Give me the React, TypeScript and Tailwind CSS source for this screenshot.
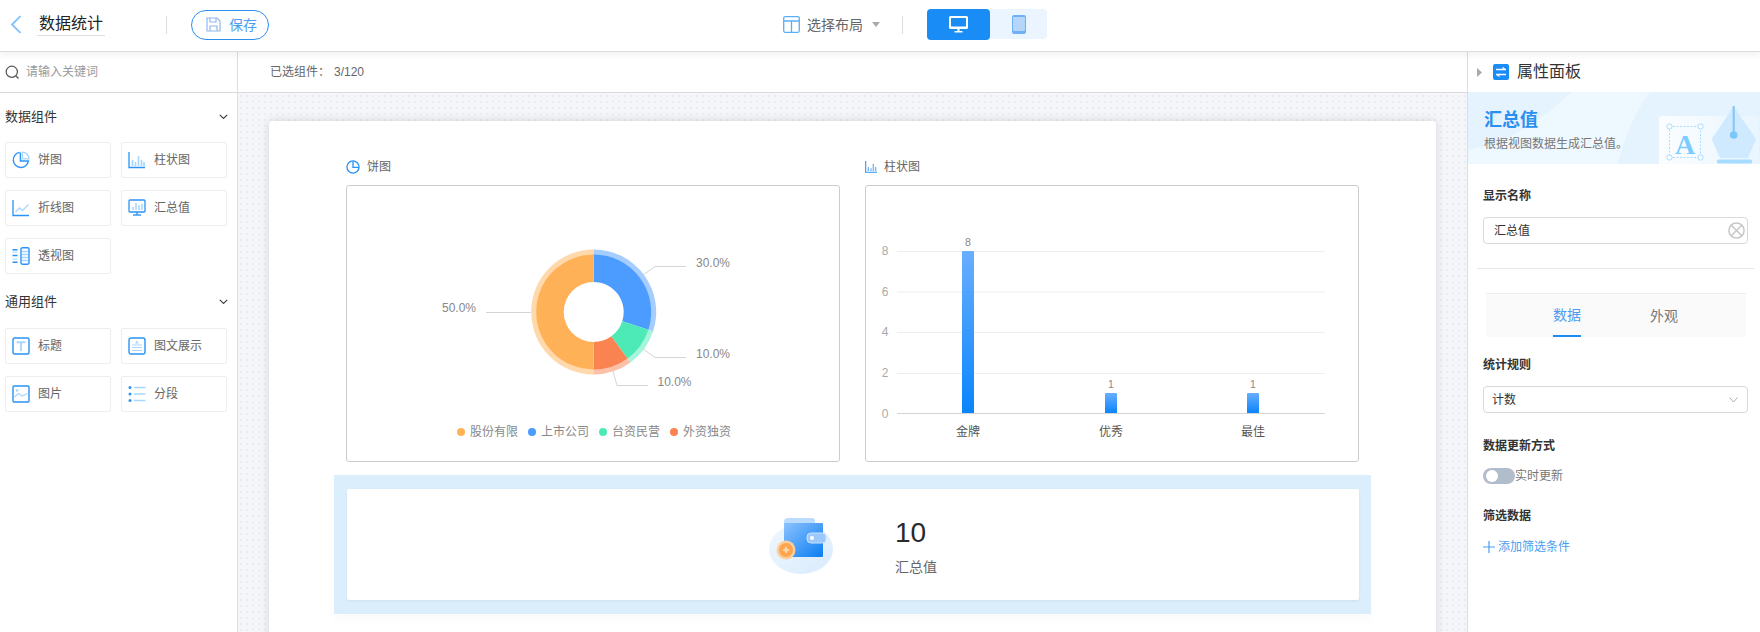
import React from "react";

const B = "#2b93f5";
const L = "#a9d6ff";

function polar(r: number, pct: number) {
  const a = (pct / 100) * Math.PI * 2;
  return [r * Math.sin(a), -r * Math.cos(a)];
}
function ring(r0: number, r1: number, from: number, to: number) {
  const [x0, y0] = polar(r1, from);
  const [x1, y1] = polar(r1, to);
  const [x2, y2] = polar(r0, to);
  const [x3, y3] = polar(r0, from);
  const large = to - from > 50 ? 1 : 0;
  return `M${x0} ${y0}A${r1} ${r1} 0 ${large} 1 ${x1} ${y1}L${x2} ${y2}A${r0} ${r0} 0 ${large} 0 ${x3} ${y3}Z`;
}

const Icon = ({ children, s = 18 }: { children: React.ReactNode; s?: number }) => (
  <svg width={s} height={s} viewBox="0 0 18 18" fill="none" className="shrink-0">
    {children}
  </svg>
);

const PieI = ({ s }: { s?: number }) => (
  <Icon s={s}>
    <path d="M7.6 1.4A7.6 7.6 0 1 0 16.4 10H8.4V1.4" stroke={B} strokeWidth="1.4" />
    <path d="M10.4 1.2A6.8 6.8 0 0 1 17 7.8H10.4Z" stroke={L} strokeWidth="1.3" />
  </Icon>
);
const TitlePie = () => (
  <Icon s={14}>
    <circle cx="9" cy="9" r="7.8" stroke={B} strokeWidth="1.7" />
    <path d="M9 1.5V9.5H16.5" stroke={B} strokeWidth="1.7" />
  </Icon>
);
const BarI = ({ s }: { s?: number }) => (
  <Icon s={s}>
    <path d="M1 1V16.5H17" stroke={B} strokeWidth="1.3" />
    <path d="M4.5 15V9M7.5 15V11M10.5 15V5M13.5 15V9M16 15V11" stroke={L} strokeWidth="1.7" />
  </Icon>
);
const TitleBar = () => (
  <Icon s={12}>
    <path d="M1 0V17H18" stroke={B} strokeWidth="1.6" />
    <path d="M5 15V9M9 15V11M12.5 15V4M16 15V9" stroke="#73b6f8" strokeWidth="2" />
  </Icon>
);
const LineI = () => (
  <Icon>
    <path d="M1 1V16.5H17" stroke={B} strokeWidth="1.3" />
    <path d="M3.5 13L7.5 9L10.5 11.5L16.5 5.5" stroke={L} strokeWidth="1.3" />
  </Icon>
);
const SumI = () => (
  <Icon>
    <rect x="1" y="1" width="16" height="12" rx="1" stroke={B} strokeWidth="1.3" />
    <path d="M5 11V8M8 11V4M11 11V6M14 11V5" stroke={L} strokeWidth="1.6" />
    <path d="M5 16H13" stroke={B} strokeWidth="1.4" />
    <path d="M9 13V16" stroke={B} strokeWidth="1.3" />
  </Icon>
);
const PivotI = () => (
  <Icon>
    <rect x="9" y="0.8" width="8" height="16.4" rx="1.4" stroke={B} strokeWidth="1.4" />
    <path d="M10 4.5H16M10 7.5H16M10 10.5H16M10 13.5H16" stroke={L} strokeWidth="1.3" />
    <path d="M0.5 2.8H5.5M0.5 8.5H5.5M0.5 15.2H5.5" stroke={B} strokeWidth="1.4" />
    <path d="M0.5 5H5.5M0.5 12H5.5" stroke={L} strokeWidth="1" />
  </Icon>
);
const TitleI = () => (
  <Icon>
    <rect x="1" y="1" width="16" height="16" rx="1.5" stroke={B} strokeWidth="1.4" />
    <path d="M4.5 5.2H13.5M9 5.2V14" stroke={L} strokeWidth="1.9" />
  </Icon>
);
const RichI = () => (
  <Icon>
    <rect x="1" y="1" width="16" height="16" rx="2" stroke={B} strokeWidth="1.4" />
    <path d="M9 3.5L11 6.5H7Z" fill={L} />
    <path d="M4 8H14M4 10.5H14M4 13.5H14" stroke={L} strokeWidth="1.2" />
  </Icon>
);
const PicI = () => (
  <Icon>
    <rect x="1" y="1" width="16" height="16" rx="1" stroke={B} strokeWidth="1.4" />
    <circle cx="5" cy="5.5" r="1.3" fill={L} />
    <path d="M2.5 12L6.5 8.5L10 11L15.5 8.5" stroke={L} strokeWidth="1.2" />
  </Icon>
);
const ListI = () => (
  <Icon>
    <circle cx="2" cy="2.5" r="1.5" fill={B} />
    <circle cx="2" cy="9" r="1.5" fill={B} />
    <circle cx="2" cy="15.5" r="1.5" fill={B} />
    <path d="M6 2.5H17.5M6 9H17.5M6 15.5H17.5" stroke={L} strokeWidth="1.3" />
  </Icon>
);

const Chevron = () => (
  <svg width="9" height="6" viewBox="0 0 9 6" fill="none">
    <path d="M0.8 0.8L4.5 4.5L8.2 0.8" stroke="#444" strokeWidth="1.2" />
  </svg>
);

const Item = ({ icon, label }: { icon: React.ReactNode; label: string }) => (
  <div className="h-9 border border-[#eeeeee] rounded-[2px] flex items-center pl-[6px] gap-[8px] text-xs text-[#666666] bg-white">
    {icon}
    <span>{label}</span>
  </div>
);

const Section = ({ title, extra, head, children }: { title: string; extra?: string; head: string; children: React.ReactNode }) => (
  <div className={extra}>
    <div className={`h-[49px] flex items-center justify-between pl-[5px] pr-[9px] text-[13px] text-[#333333] ${head}`}>
      <span>{title}</span>
      <Chevron />
    </div>
    <div className="grid grid-cols-[106px_106px] gap-x-[10px] gap-y-[12px] pl-[5px]">{children}</div>
  </div>
);

const Label = ({ children }: { children: React.ReactNode }) => (
  <div className="text-xs font-semibold text-[#333333] leading-[16px]">{children}</div>
);

const PieChart = () => {
  const slices = [
    { c: "#4c9bff", a: 0, b: 30 },
    { c: "#4deab8", a: 30, b: 40 },
    { c: "#f98452", a: 40, b: 50 },
    { c: "#ffb157", a: 50, b: 100 },
  ];
  return (
    <svg width="492" height="275" viewBox="0 0 492 275" className="block">
      <g transform="translate(246.7 126)">
        {slices.map((s) => (
          <path key={s.c} d={ring(57, 62.5, s.a, s.b)} fill={s.c} opacity={0.5} />
        ))}
        {slices.map((s) => (
          <path key={s.c + "m"} d={ring(30, 57.5, s.a, s.b)} fill={s.c} />
        ))}
      </g>
      <g stroke="#d5d5d5" fill="none">
        <path d="M296 89L308 80.5H339" />
        <path d="M296 163L308 171.5H339" />
        <path d="M266 185L270 199.5H301" />
        <path d="M184 126.5H139" />
      </g>
      <g fill="#888888" fontSize="12">
        <text x="349" y="81">30.0%</text>
        <text x="349" y="172">10.0%</text>
        <text x="310.5" y="200">10.0%</text>
        <text x="95" y="126">50.0%</text>
      </g>
    </svg>
  );
};

const BarChart = () => {
  const gy = [252, 292.5, 333, 374];
  const ox = 866;
  const oy = 187;
  const bars = [
    { x: 962, y: 252, l: "8", n: "金牌", id: "g1" },
    { x: 1105, y: 394, l: "1", n: "优秀", id: "g2" },
    { x: 1247, y: 394, l: "1", n: "最佳", id: "g3" },
  ];
  return (
    <svg width="492" height="275" viewBox="0 0 492 275" className="block">
      <defs>
        {bars.map((b) => (
          <linearGradient key={b.id} id={b.id} x1="0" y1="0" x2="0" y2="1">
            <stop offset="0" stopColor="#69aeff" />
            <stop offset="1" stopColor="#0a85fb" />
          </linearGradient>
        ))}
      </defs>
      {gy.map((y) => (
        <path key={y} d={`M${897 - ox} ${y - oy + 0.5}H${1325 - ox}`} stroke="#eeeeee" />
      ))}
      <path d={`M${897 - ox} ${414.5 - oy}H${1325 - ox}`} stroke="#d4d4d4" />
      {["8", "6", "4", "2", "0"].map((t, i) => (
        <text key={t} x={885 - ox} y={[256, 296.5, 336.5, 377.5, 418.5][i] - oy} fill="#aaaaaa" fontSize="12" textAnchor="middle">
          {t}
        </text>
      ))}
      {bars.map((b) => (
        <g key={b.id}>
          <path d={`M${b.x - ox} ${414 - oy}V${b.y - oy + 1}q0 -1 1 -1h10q1 0 1 1V${414 - oy}Z`} fill={`url(#${b.id})`} />
          <text x={b.x + 6 - ox} y={b.y - oy - 5} fill="#888888" fontSize="10.5" textAnchor="middle">
            {b.l}
          </text>
          <text x={b.x + 6 - ox} y={437 - oy} fill="#555555" fontSize="12" textAnchor="middle">
            {b.n}
          </text>
        </g>
      ))}
    </svg>
  );
};

const Wallet = () => (
  <svg width="68" height="62" viewBox="0 0 68 62" className="shrink-0">
    <defs>
      <linearGradient id="ws" x1="0" y1="0" x2="1" y2="1">
        <stop offset="0" stopColor="#f0f7ff" />
        <stop offset="1" stopColor="#d9ebfd" />
      </linearGradient>
      <linearGradient id="wb" x1="0" y1="0" x2="1" y2="1">
        <stop offset="0" stopColor="#8cc2ff" />
        <stop offset="1" stopColor="#0b7ef2" />
      </linearGradient>
    </defs>
    <ellipse cx="33" cy="35" rx="32" ry="25" fill="url(#ws)" />
    <path d="M16 8q0-4 4-4h24q3 0 3 3v6H16Z" fill="#bcdcff" />
    <rect x="16" y="9" width="39" height="34" rx="1" fill="url(#wb)" />
    <rect x="39" y="19" width="19" height="10" rx="4" fill="#9cc9fb" stroke="#c7e1fd" strokeWidth="1" />
    <circle cx="44" cy="24" r="2" fill="#ffffff" />
    <circle cx="18" cy="36" r="9.5" fill="#ffcf9b" />
    <circle cx="18" cy="36" r="7" fill="#ffa550" />
    <path d="M18 32L20 36L18 40L16 36ZM14 36L18 34L22 36L18 38Z" fill="#ffd9ae" />
  </svg>
);

export default function App() {
  return (
    <div className="w-[1760px] h-[632px] flex flex-col overflow-hidden bg-white font-['Liberation_Sans','Noto_Sans_CJK_SC',sans-serif]">
      {/* Top bar */}
      <header className="relative z-10 h-[52px] shrink-0 bg-white border-b border-[#dddddd] shadow-[0_2px_8px_rgba(0,0,0,0.07)] flex items-center">
        <svg width="12" height="19" viewBox="0 0 12 19" fill="none" className="ml-[10px] mb-[3px]">
          <path d="M10.5 1.2L2 9.5L10.5 17.8" stroke="#7fc2ff" strokeWidth="1.8" />
        </svg>
        <div className="ml-[15px] w-[68px] mb-[2px] border-b border-[#dddddd] text-base leading-[22px] text-[#222222] text-center h-[23px]">数据统计</div>
        <div className="ml-[61px] w-px h-[18px] bg-[#dddddd] mb-px" />
        <button className="ml-[24px] w-[78px] h-[30px] rounded-full border border-[#2b8ff0] flex items-center pl-[14px] gap-[8px] text-sm text-[#4a9df0] mb-[2px]">
          <svg width="15" height="15" viewBox="0 0 15 15" fill="none">
            <path d="M1 1H11L14 4V14H1Z" stroke="#8fb8f0" strokeWidth="1.2" />
            <path d="M4 1V5H10V1M4 14V9H11V14" stroke="#8fb8f0" strokeWidth="1.2" />
          </svg>
          <span>保存</span>
        </button>
        <svg width="17" height="17" viewBox="0 0 17 17" fill="none" className="ml-[514px] mb-[2px]">
          <rect x="0.7" y="0.7" width="15.6" height="15.6" rx="1.5" stroke="#59aef9" strokeWidth="1.3" />
          <path d="M1 5H16M8.5 5V16" stroke="#59aef9" strokeWidth="1.3" />
        </svg>
        <span className="ml-[7px] text-sm text-[#666666] mb-[2px]">选择布局</span>
        <svg width="8" height="5" viewBox="0 0 8 5" className="ml-[9px] mb-[2px]">
          <path d="M0 0H8L4 5Z" fill="#aaaaaa" />
        </svg>
        <div className="ml-[22px] w-px h-[18px] bg-[#dddddd] mb-[2px]" />
        <div className="ml-[24px] flex mb-[2px]">
          <button className="w-[63px] h-[31px] rounded-[4px] bg-[#1a8cf5] flex items-center justify-center">
            <svg width="19" height="17" viewBox="0 0 19 17">
              <path d="M1.5 0H17.5Q19 0 19 1.5V11.5Q19 13 17.5 13H1.5Q0 13 0 11.5V1.5Q0 0 1.5 0ZM2 2V10.5H17V2Z" fill="#ffffff" fillRule="evenodd" />
              <path d="M8.5 13H10.5V15H13.5V16.5H5.5V15H8.5Z" fill="#ffffff" />
            </svg>
          </button>
          <button className="w-[57px] h-[30px] rounded-r-[4px] bg-[#eaf5ff] flex items-center justify-center">
            <svg width="14" height="19" viewBox="0 0 14 19">
              <path d="M2 0H12Q14 0 14 2V17Q14 19 12 19H2Q0 19 0 17V2Q0 0 2 0ZM1.5 2V15.5H12.5V2Z" fill="#6fb0f7" fillRule="evenodd" />
              <rect x="1.5" y="2" width="11" height="13.5" fill="#b5d6fb" />
            </svg>
          </button>
        </div>
      </header>

      <div className="flex-1 flex min-h-0">
        {/* Left */}
        <aside className="w-[238px] shrink-0 border-r border-[#dddddd] bg-white">
          <div className="h-[41px] border-b border-[#d9d9d9] flex items-center pl-[5px] gap-[6px] text-xs text-[#999999]">
            <svg width="15" height="15" viewBox="0 0 15 15" fill="none">
              <circle cx="6.8" cy="6.8" r="5.6" stroke="#555555" strokeWidth="1.2" />
              <path d="M11 11L13.5 13.5" stroke="#555555" strokeWidth="1.2" />
            </svg>
            <span>请输入关键词</span>
          </div>
          <Section title="数据组件" head="pb-[2px]">
            <Item icon={<PieI />} label="饼图" />
            <Item icon={<BarI />} label="柱状图" />
            <Item icon={<LineI />} label="折线图" />
            <Item icon={<SumI />} label="汇总值" />
            <Item icon={<PivotI />} label="透视图" />
          </Section>
          <Section title="通用组件" extra="mt-[5px]" head="pb-[3px]">
            <Item icon={<TitleI />} label="标题" />
            <Item icon={<RichI />} label="图文展示" />
            <Item icon={<PicI />} label="图片" />
            <Item icon={<ListI />} label="分段" />
          </Section>
        </aside>

        {/* Centre */}
        <main className="flex-1 min-w-0 flex flex-col">
          <div className="h-[41px] shrink-0 border-b border-[#d9d9d9] flex items-center pl-[32px] text-xs text-[#666666]">
            <span>已选组件：</span>
            <span className="ml-[4px]">3/120</span>
          </div>
          <div className="flex-1 min-h-0 overflow-hidden bg-[#f5f6fa] bg-[radial-gradient(#ebecf1_1px,transparent_1px)] bg-[length:6px_6px] pl-[31px] pt-[28px]">
            <div className="w-[1167px] h-[600px] bg-white rounded-[3px] shadow-[0_0_10px_rgba(0,0,0,0.14)] pt-[37px]">
              <div className="flex pl-[77px] gap-[25px]">
                <div className="w-[494px]">
                  <div className="h-[27px] flex items-start gap-[7px] text-xs text-[#666666] leading-[18px]">
                    <span className="mt-[2px]"><TitlePie /></span>
                    <span>饼图</span>
                  </div>
                  <div className="w-[494px] h-[277px] border border-[#cccccc] rounded-[3px] flex flex-col">
                    <PieChart />
                  </div>
                  <div className="relative -mt-[39px] ml-[111px] flex items-center text-xs text-[#888888] gap-[10px] h-[18px]">
                    {[
                      ["bg-[#ffb157]", "股份有限"],
                      ["bg-[#4c9bff]", "上市公司"],
                      ["bg-[#4deab8]", "台资民营"],
                      ["bg-[#f98452]", "外资独资"],
                    ].map(([c, t]) => (
                      <span key={t} className="flex items-center gap-[5px]">
                        <i className={`block w-2 h-2 rounded-full ${c}`} />
                        {t}
                      </span>
                    ))}
                  </div>
                </div>
                <div className="w-[494px]">
                  <div className="h-[27px] flex items-start gap-[7px] text-xs text-[#666666] leading-[18px]">
                    <span className="mt-[3px]"><TitleBar /></span>
                    <span>柱状图</span>
                  </div>
                  <div className="w-[494px] h-[277px] border border-[#cccccc] rounded-[3px]">
                    <BarChart />
                  </div>
                </div>
              </div>
              <div className="ml-[65px] mt-[13px] w-[1037px] h-[139px] bg-[#dbeefc] pl-[13px] pr-[12px] pt-[14px] pb-[14px] shadow-[0_6px_10px_rgba(0,0,0,0.02)]">
                <div className="h-full bg-white rounded-[2px] shadow-[0_1px_3px_rgba(0,0,0,0.06)] flex items-center pl-[421px]">
                  <Wallet />
                  <div className="ml-[59px]">
                    <div className="text-[28px] leading-[36px] text-[#2a2a2a] translate-y-[1px]">10</div>
                    <div className="mt-[8px] text-sm leading-[18px] text-[#666666]">汇总值</div>
                  </div>
                </div>
              </div>
            </div>
          </div>
        </main>

        {/* Right */}
        <aside className="w-[293px] shrink-0 border-l border-[#dddddd] bg-white flex flex-col">
          <div className="h-[40px] shrink-0 flex items-center pl-[9px]">
            <svg width="5" height="9" viewBox="0 0 5 9">
              <path d="M0 0L5 4.5L0 9Z" fill="#aaaaaa" />
            </svg>
            <svg width="16" height="16" viewBox="0 0 16 16" className="ml-[11px]">
              <rect width="16" height="16" rx="2" fill="#1a8cf5" />
              <path d="M3 5.5H13M3 10.5H13" stroke="#ffffff" strokeWidth="1.3" />
              <path d="M9.5 3.5L12 5.5M6.5 12.5L4 10.5" stroke="#ffffff" strokeWidth="1.2" />
            </svg>
            <span className="ml-[8px] text-base text-[#333333]">属性面板</span>
          </div>
          <div className="relative h-[72px] shrink-0 overflow-hidden bg-[#e4f3fe]">
            <svg width="292" height="72" viewBox="0 0 292 72" className="absolute inset-0">
              <defs>
                <linearGradient id="bn" x1="0" y1="0" x2="1" y2="0">
                  <stop offset="0" stopColor="#ffffff" />
                  <stop offset="1" stopColor="#eaf6ff" />
                </linearGradient>
              </defs>
              <path d="M104 0H182Q160 30 150 72H0V58Q50 50 104 0Z" fill="#eef8ff" />
              <rect x="191" y="24" width="100" height="60" rx="3" fill="url(#bn)" opacity="0.85" />
              <path d="M265.7 14.5L288 47L280 66H252L243.7 47Z" fill="#cfeaff" />
              <path d="M265.7 14V42" stroke="#7cc6fb" strokeWidth="2" />
              <circle cx="265.7" cy="43" r="3.8" fill="#7cc6fb" />
              <rect x="249" y="67.5" width="35" height="4" rx="1.5" fill="#a6dcff" />
              <rect x="201.5" y="34.5" width="31" height="31" fill="none" stroke="#a9dcff" strokeDasharray="2 1.5" />
              <text x="217" y="62" textAnchor="middle" fontFamily="'Liberation Serif',serif" fontWeight="700" fontSize="28" fill="#7dccff">A</text>
              {[[201.5, 34.5], [232.5, 34.5], [201.5, 65.5], [232.5, 65.5]].map(([x, y]) => (
                <circle key={`${x}-${y}`} cx={x} cy={y} r="2.6" fill="#ffffff" stroke="#a6dcff" />
              ))}
            </svg>
            <div className="relative pl-[16px] pt-[16px]">
              <div className="text-lg font-bold leading-[24px] text-[#2b8ff0]">汇总值</div>
              <div className="text-xs leading-[16px] mt-[4px] text-[#777777]">根据视图数据生成汇总值。</div>
            </div>
          </div>
          <div className="flex-1 pl-[15px]">
            <div className="mt-[24px]"><Label>显示名称</Label></div>
            <div className="mt-[13px] w-[265px] h-[27px] border border-[#d9d9d9] rounded-[4px] flex items-center justify-between pl-[10px] pr-[2px] text-xs text-[#333333]">
              <span>汇总值</span>
              <svg width="17" height="17" viewBox="0 0 17 17" fill="none">
                <circle cx="8.5" cy="8.5" r="7.6" stroke="#c8c8c8" strokeWidth="1.5" />
                <path d="M3 3L14 14M14 3L3 14" stroke="#c8c8c8" strokeWidth="1.5" />
              </svg>
            </div>
            <div className="mt-[24px] -ml-[6px] w-[277px] h-px bg-[#e8e8e8]" />
            <div className="mt-[24px] ml-[3px] w-[260px] h-[44px] bg-[#fafafa] border-t border-[#eeeeee] flex text-sm">
              <div className="ml-[67px] w-[28px] h-full border-b-[2px] border-[#1a8cf5] text-[#4a9df0] flex items-center pt-[1px]">数据</div>
              <div className="ml-[69px] w-[28px] h-full text-[#777777] flex items-center pt-[1px]">外观</div>
            </div>
            <div className="mt-[20px]"><Label>统计规则</Label></div>
            <div className="mt-[13px] w-[265px] h-[27px] border border-[#d9d9d9] rounded-[4px] flex items-center justify-between pl-[8px] pr-[9px] text-xs text-[#333333]">
              <span>计数</span>
              <svg width="9" height="6" viewBox="0 0 9 6" fill="none">
                <path d="M0.5 0.5L4.5 5L8.5 0.5" stroke="#aaaaaa" />
              </svg>
            </div>
            <div className="mt-[25px]"><Label>数据更新方式</Label></div>
            <div className="mt-[14px] flex items-center text-xs text-[#777777] h-[16px]">
              <div className="w-[32px] h-[16px] rounded-full bg-[#b2bdcc] pl-[3px] flex items-center">
                <div className="w-[12px] h-[12px] rounded-full bg-white" />
              </div>
              <span>实时更新</span>
            </div>
            <div className="mt-[24px]"><Label>筛选数据</Label></div>
            <div className="mt-[15px] flex items-center text-xs text-[#4a9df0] h-[16px]">
              <svg width="12" height="12" viewBox="0 0 12 12" fill="none">
                <path d="M6 0V12M0 6H12" stroke="#4a9df0" strokeWidth="1.2" />
              </svg>
              <span className="ml-[3px]">添加筛选条件</span>
            </div>
          </div>
        </aside>
      </div>
    </div>
  );
}
